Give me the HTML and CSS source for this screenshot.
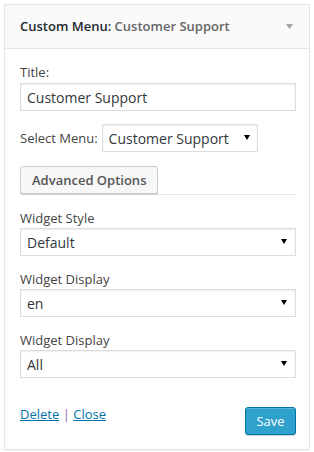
FILE: index.html
```html
<!DOCTYPE html>
<html lang="en">
<head>
  <meta charset="UTF-8" />
  <meta name="viewport" content="width=device-width, initial-scale=1.0"/>
  <title>Custom Menu Widget</title>
  <link rel="stylesheet" href="styles.css">
</head>
<body>
  <div class="widget">
    <div class="widget-top">
      <h3>Custom Menu: <span class="in-title">Customer Support</span></h3>
      <svg class="toggle" width="7" height="5" viewBox="0 0 7 5"><path d="M0 0h7L3.5 5z" fill="#a0a5aa"/></svg>
    </div>

    <div class="widget-inside">
      <div class="field">
        <label for="title">Title:</label>
        <input id="title" type="text" value="Customer Support">
      </div>

      <div class="field-inline">
        <label for="menu">Select Menu:</label>
        <span class="select select-menu">
          <select id="menu"><option>Customer Support</option></select>
        </span>
      </div>

      <div class="tabs">
        <button class="btn">Advanced Options</button>
      </div>

      <div class="group">
        <label for="style">Widget Style</label>
        <span class="select">
          <select id="style"><option>Default</option></select>
        </span>
      </div>

      <div class="group">
        <label for="lang">Widget Display</label>
        <span class="select">
          <select id="lang"><option>en</option></select>
        </span>
      </div>

      <div class="group">
        <label for="display">Widget Display</label>
        <span class="select">
          <select id="display"><option>All</option></select>
        </span>
      </div>

      <div class="actions">
        <div class="links">
          <a href="#">Delete</a> <span class="sep">|</span> <a href="#">Close</a>
        </div>
        <button class="btn btn-primary">Save</button>
      </div>
    </div>
  </div>
</body>
</html>
```

FILE: styles.css
```css
* {
  box-sizing: border-box;
  margin: 0;
  padding: 0;
}

body {
  font-family: "Open Sans", sans-serif;
  font-size: 13px;
  color: #444;
  background: #fff;
  padding: 4px;
}

/* Widget box */
.widget {
  width: 306px;
  background: #fff;
  border: 1px solid #e5e5e5;
  box-shadow: 0 1px 1px rgba(0, 0, 0, 0.04);
}

.widget-top {
  display: flex;
  align-items: center;
  justify-content: space-between;
  height: 44px;
  padding: 0 16px 1px 15px;
  background: #fafafa;
  border-bottom: 1px solid #e5e5e5;
}

.widget-top h3 {
  font-size: 13px;
  font-weight: 600;
  color: #23282d;
}

.in-title {
  color: #666;
}

/* Form */
.widget-inside {
  padding: 14px 13px 14px 15px;
}

label {
  display: block;
  line-height: 18px;
  white-space: nowrap;
}

.field label {
  margin-bottom: 2px;
}

input[type="text"],
select {
  font-family: "Open Sans", sans-serif;
  font-size: 14px;
  color: #32373c;
  height: 28px;
  width: 100%;
  padding: 0 6px;
  background: #fff;
  border: 1px solid #ddd;
  box-shadow: inset 0 1px 2px rgba(0, 0, 0, 0.07);
  border-radius: 0;
  outline: none;
}

select {
  appearance: none;
  -webkit-appearance: none;
}

.select {
  position: relative;
  display: block;
}

.select::after {
  content: "";
  position: absolute;
  right: 9px;
  top: 11px;
  border-left: 3px solid transparent;
  border-right: 3px solid transparent;
  border-top: 5px solid #000;
  pointer-events: none;
}

.field-inline {
  display: flex;
  align-items: center;
  gap: 4px;
  margin-top: 13px;
}

.select-menu {
  width: 156px;
}

.select-menu::after {
  right: 8px;
}

.tabs {
  margin-top: 14px;
  border-bottom: 1px solid #e5e5e5;
}

.btn {
  font-family: "Open Sans", sans-serif;
  font-size: 13px;
  font-weight: 600;
  height: 28px;
  padding: 0 11px;
  white-space: nowrap;
  color: #555;
  background: #f7f7f7;
  border: 1px solid #ccc;
  border-radius: 3px;
  box-shadow: 0 1px 0 #ccc;
  cursor: pointer;
}

.tabs .btn {
  display: block;
}

.group {
  margin-top: 14px;
}

.group label {
  margin-bottom: 1px;
}

/* Footer */
.actions {
  display: flex;
  justify-content: space-between;
  align-items: flex-start;
  margin-top: 27px;
}

.links {
  line-height: 18px;
}

.links a {
  color: #0073aa;
  text-decoration: underline;
}

.sep {
  color: #8a6bb0;
}

.btn-primary {
  margin-top: 2px;
  width: 51px;
  padding: 0;
  font-weight: 400;
  color: #fff;
  background: #2ea2cc;
  border-color: #0074a2;
  box-shadow: inset 0 1px 0 rgba(120, 200, 230, 0.5), 0 1px 0 rgba(0, 0, 0, 0.15);
}
```
